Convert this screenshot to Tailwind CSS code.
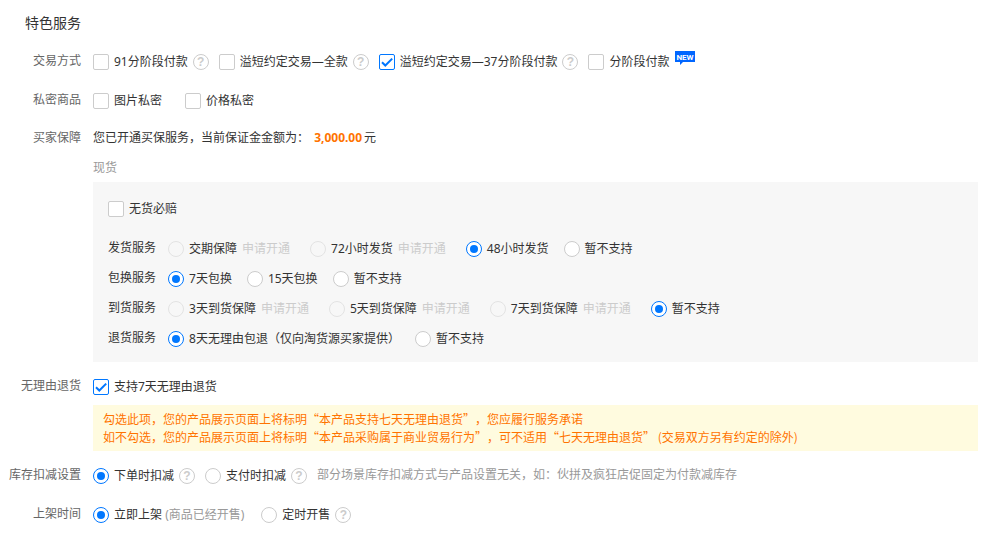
<!DOCTYPE html>
<html lang="zh-CN">
<head>
  <meta charset="UTF-8">
  <meta name="viewport" content="width=device-width, initial-scale=1.0">
  <title>特色服务</title>
  <script src="https://cdn.jsdelivr.net/npm/@tailwindcss/browser@4"></script>
</head>
<body class="bg-white font-['Noto_Sans','Noto_Sans_CJK_SC',sans-serif] text-[12px] leading-[20px] text-[#333]">
  <form class="pt-[13px] pr-[5px] pb-5">
    <h2 class="pl-[25px] text-[14px] leading-[20px]">特色服务</h2>

    <!-- 交易方式 -->
    <div class="mt-[19px] flex gap-3">
      <div class="w-[81px] flex-none text-right leading-[18px] text-[#666]">交易方式</div>
      <div class="flex flex-1 flex-wrap items-center gap-x-[10px]">
        <div class="flex items-center gap-[5px]">
          <label class="flex items-center gap-[5px]">
            <input type="checkbox" class="size-4 appearance-none rounded-[2px] border border-[#ccc] bg-white">
            91分阶段付款
          </label>
          <button type="button" aria-label="帮助" class="flex size-4 items-center justify-center rounded-full border border-[#ccc] font-['Liberation_Sans',sans-serif] text-[12px] leading-none font-bold text-[#ccc]">?</button>
        </div>
        <div class="flex items-center gap-[5px]">
          <label class="flex items-center gap-[5px]">
            <input type="checkbox" class="size-4 appearance-none rounded-[2px] border border-[#ccc] bg-white">
            溢短约定交易—全款
          </label>
          <button type="button" aria-label="帮助" class="flex size-4 items-center justify-center rounded-full border border-[#ccc] font-['Liberation_Sans',sans-serif] text-[12px] leading-none font-bold text-[#ccc]">?</button>
        </div>
        <div class="flex items-center gap-[5px]">
          <label class="flex items-center gap-[5px]">
            <span class="grid size-4">
              <input type="checkbox" checked class="col-start-1 row-start-1 size-4 appearance-none rounded-[2px] border border-[#0077ff] bg-white">
              <svg class="pointer-events-none col-start-1 row-start-1 size-4" viewBox="0 0 16 16" fill="none" stroke="#0077ff" stroke-width="2"><path d="M3 8.2l3.3 3.3L13.2 4.6" /></svg>
            </span>
            溢短约定交易—37分阶段付款
          </label>
          <button type="button" aria-label="帮助" class="flex size-4 items-center justify-center rounded-full border border-[#ccc] font-['Liberation_Sans',sans-serif] text-[12px] leading-none font-bold text-[#ccc]">?</button>
        </div>
        <div class="flex items-center gap-[5px]">
          <label class="flex items-center gap-[5px]">
            <input type="checkbox" class="size-4 appearance-none rounded-[2px] border border-[#ccc] bg-white">
            分阶段付款
          </label>
          <svg class="-mt-px h-[14px] w-5 self-start" viewBox="0 0 20 14">
            <path fill="#0066ff" d="M0 0h20v11H8l-3 3v-3H0z" />
            <text x="10" y="9" text-anchor="middle" fill="#fff" class="font-['Roboto',sans-serif] text-[8px] font-bold">NEW</text>
          </svg>
        </div>
      </div>
    </div>

    <!-- 私密商品 -->
    <div class="mt-[19px] flex gap-3">
      <div class="w-[81px] flex-none text-right leading-[18px] text-[#666]">私密商品</div>
      <div class="flex flex-1 flex-wrap items-center gap-x-[23px]">
        <label class="flex items-center gap-[5px]">
          <input type="checkbox" class="size-4 appearance-none rounded-[2px] border border-[#ccc] bg-white">
          图片私密
        </label>
        <label class="flex items-center gap-[5px]">
          <input type="checkbox" class="size-4 appearance-none rounded-[2px] border border-[#ccc] bg-white">
          价格私密
        </label>
      </div>
    </div>

    <!-- 买家保障 -->
    <div class="mt-[17px] flex gap-3">
      <div class="w-[81px] flex-none text-right text-[#666]">买家保障</div>
      <div class="min-w-0 flex-1">
        <p>您已开通买保服务，当前保证金金额为： <strong class="px-0.5 font-bold text-[#ff7300]">3,000.00</strong>元</p>
        <p class="mt-[10px] text-[#999]">现货</p>

        <div class="mt-1 bg-[#f7f7f7] px-[15px] pt-[17px] pb-[13px]">
          <div class="flex">
            <label class="flex items-center gap-[5px]">
              <input type="checkbox" class="size-4 appearance-none rounded-[2px] border border-[#ccc] bg-white">
              无货必赔
            </label>
          </div>

          <div class="mt-5 space-y-[10px]">
            <div class="flex gap-3">
              <div class="leading-[18px]">发货服务</div>
              <div class="flex flex-wrap items-center gap-x-5">
                <div class="flex items-center gap-[5px]">
                  <label class="flex items-center gap-[5px]">
                    <input type="radio" name="ship" disabled class="size-4 appearance-none rounded-full border border-[#e3e3e3]">
                    交期保障
                  </label>
                  <a href="#" class="text-[#ccc]">申请开通</a>
                </div>
                <div class="flex items-center gap-[5px]">
                  <label class="flex items-center gap-[5px]">
                    <input type="radio" name="ship" disabled class="size-4 appearance-none rounded-full border border-[#e3e3e3]">
                    72小时发货
                  </label>
                  <a href="#" class="text-[#ccc]">申请开通</a>
                </div>
                <div class="flex items-center gap-[15px]">
                  <label class="flex items-center gap-[5px]">
                    <input type="radio" name="ship" checked class="grid size-4 appearance-none place-content-center rounded-full border border-[#ccc] bg-white before:size-2 before:rounded-full checked:border-[#0077ff] checked:before:bg-[#0077ff]">
                    48小时发货
                  </label>
                  <label class="flex items-center gap-[5px]">
                    <input type="radio" name="ship" class="grid size-4 appearance-none place-content-center rounded-full border border-[#ccc] bg-white before:size-2 before:rounded-full checked:border-[#0077ff] checked:before:bg-[#0077ff]">
                    暂不支持
                  </label>
                </div>
              </div>
            </div>

            <div class="flex gap-3">
              <div class="leading-[18px]">包换服务</div>
              <div class="flex flex-wrap items-center gap-x-[15px]">
                <label class="flex items-center gap-[5px]">
                  <input type="radio" name="exchange" checked class="grid size-4 appearance-none place-content-center rounded-full border border-[#ccc] bg-white before:size-2 before:rounded-full checked:border-[#0077ff] checked:before:bg-[#0077ff]">
                  7天包换
                </label>
                <label class="flex items-center gap-[5px]">
                  <input type="radio" name="exchange" class="grid size-4 appearance-none place-content-center rounded-full border border-[#ccc] bg-white before:size-2 before:rounded-full checked:border-[#0077ff] checked:before:bg-[#0077ff]">
                  15天包换
                </label>
                <label class="flex items-center gap-[5px]">
                  <input type="radio" name="exchange" class="grid size-4 appearance-none place-content-center rounded-full border border-[#ccc] bg-white before:size-2 before:rounded-full checked:border-[#0077ff] checked:before:bg-[#0077ff]">
                  暂不支持
                </label>
              </div>
            </div>

            <div class="flex gap-3">
              <div class="leading-[18px]">到货服务</div>
              <div class="flex flex-wrap items-center gap-x-5">
                <div class="flex items-center gap-[5px]">
                  <label class="flex items-center gap-[5px]">
                    <input type="radio" name="arrive" disabled class="size-4 appearance-none rounded-full border border-[#e3e3e3]">
                    3天到货保障
                  </label>
                  <a href="#" class="text-[#ccc]">申请开通</a>
                </div>
                <div class="flex items-center gap-[5px]">
                  <label class="flex items-center gap-[5px]">
                    <input type="radio" name="arrive" disabled class="size-4 appearance-none rounded-full border border-[#e3e3e3]">
                    5天到货保障
                  </label>
                  <a href="#" class="text-[#ccc]">申请开通</a>
                </div>
                <div class="flex items-center gap-[5px]">
                  <label class="flex items-center gap-[5px]">
                    <input type="radio" name="arrive" disabled class="size-4 appearance-none rounded-full border border-[#e3e3e3]">
                    7天到货保障
                  </label>
                  <a href="#" class="text-[#ccc]">申请开通</a>
                </div>
                <label class="flex items-center gap-[5px]">
                  <input type="radio" name="arrive" checked class="grid size-4 appearance-none place-content-center rounded-full border border-[#ccc] bg-white before:size-2 before:rounded-full checked:border-[#0077ff] checked:before:bg-[#0077ff]">
                  暂不支持
                </label>
              </div>
            </div>

            <div class="flex gap-3">
              <div class="leading-[18px]">退货服务</div>
              <div class="flex flex-wrap items-center gap-x-[15px]">
                <label class="flex items-center gap-[5px]">
                  <input type="radio" name="refund" checked class="grid size-4 appearance-none place-content-center rounded-full border border-[#ccc] bg-white before:size-2 before:rounded-full checked:border-[#0077ff] checked:before:bg-[#0077ff]">
                  8天无理由包退（仅向淘货源买家提供）
                </label>
                <label class="flex items-center gap-[5px]">
                  <input type="radio" name="refund" class="grid size-4 appearance-none place-content-center rounded-full border border-[#ccc] bg-white before:size-2 before:rounded-full checked:border-[#0077ff] checked:before:bg-[#0077ff]">
                  暂不支持
                </label>
              </div>
            </div>
          </div>
        </div>
      </div>
    </div>

    <!-- 无理由退货 -->
    <div class="mt-[15px] flex gap-3">
      <div class="w-[81px] flex-none text-right leading-[18px] text-[#666]">无理由退货</div>
      <div class="min-w-0 flex-1">
        <div class="flex">
          <label class="flex items-center gap-[5px]">
            <span class="grid size-4">
              <input type="checkbox" checked class="col-start-1 row-start-1 size-4 appearance-none rounded-[2px] border border-[#0077ff] bg-white">
              <svg class="pointer-events-none col-start-1 row-start-1 size-4" viewBox="0 0 16 16" fill="none" stroke="#0077ff" stroke-width="2"><path d="M3 8.2l3.3 3.3L13.2 4.6" /></svg>
            </span>
            支持7天无理由退货
          </label>
        </div>
        <p class="mt-2 bg-[#fffbdf] px-[10px] py-[5px] font-['Noto_Sans_CJK_SC',sans-serif] leading-[18px] text-[#ff7300] [text-spacing-trim:space-all]">
          勾选此项，您的产品展示页面上将标明“本产品支持七天无理由退货”，您应履行服务承诺<br>
          如不勾选，您的产品展示页面上将标明“本产品采购属于商业贸易行为”，可不适用“七天无理由退货” (交易双方另有约定的除外)
        </p>
      </div>
    </div>

    <!-- 库存扣减设置 -->
    <div class="mt-[15px] flex gap-3">
      <div class="w-[81px] flex-none text-right leading-[18px] text-[#666]">库存扣减设置</div>
      <div class="flex flex-1 flex-wrap items-center gap-x-[10px]">
        <div class="flex items-center gap-[5px]">
          <label class="flex items-center gap-[5px]">
            <input type="radio" name="stock" checked class="grid size-4 appearance-none place-content-center rounded-full border border-[#ccc] bg-white before:size-2 before:rounded-full checked:border-[#0077ff] checked:before:bg-[#0077ff]">
            下单时扣减
          </label>
          <button type="button" aria-label="帮助" class="flex size-4 items-center justify-center rounded-full border border-[#ccc] font-['Liberation_Sans',sans-serif] text-[12px] leading-none font-bold text-[#ccc]">?</button>
        </div>
        <div class="flex items-center gap-[5px]">
          <label class="flex items-center gap-[5px]">
            <input type="radio" name="stock" class="grid size-4 appearance-none place-content-center rounded-full border border-[#ccc] bg-white before:size-2 before:rounded-full checked:border-[#0077ff] checked:before:bg-[#0077ff]">
            支付时扣减
          </label>
          <button type="button" aria-label="帮助" class="flex size-4 items-center justify-center rounded-full border border-[#ccc] font-['Liberation_Sans',sans-serif] text-[12px] leading-none font-bold text-[#ccc]">?</button>
        </div>
        <p class="self-start leading-[18px] text-[#999]">部分场景库存扣减方式与产品设置无关，如：伙拼及疯狂店促固定为付款减库存</p>
      </div>
    </div>

    <!-- 上架时间 -->
    <div class="mt-[19px] flex gap-3">
      <div class="w-[81px] flex-none text-right leading-[18px] text-[#666]">上架时间</div>
      <div class="flex flex-1 flex-wrap items-center gap-x-[17px]">
        <label class="flex items-center gap-[5px]">
          <input type="radio" name="publish" checked class="grid size-4 appearance-none place-content-center rounded-full border border-[#ccc] bg-white before:size-2 before:rounded-full checked:border-[#0077ff] checked:before:bg-[#0077ff]">
          <span>立即上架 <span class="text-[#999]">(商品已经开售)</span></span>
        </label>
        <div class="flex items-center gap-[5px]">
          <label class="flex items-center gap-[5px]">
            <input type="radio" name="publish" class="grid size-4 appearance-none place-content-center rounded-full border border-[#ccc] bg-white before:size-2 before:rounded-full checked:border-[#0077ff] checked:before:bg-[#0077ff]">
            定时开售
          </label>
          <button type="button" aria-label="帮助" class="flex size-4 items-center justify-center rounded-full border border-[#ccc] font-['Liberation_Sans',sans-serif] text-[12px] leading-none font-bold text-[#ccc]">?</button>
        </div>
      </div>
    </div>
  </form>
</body>
</html>
